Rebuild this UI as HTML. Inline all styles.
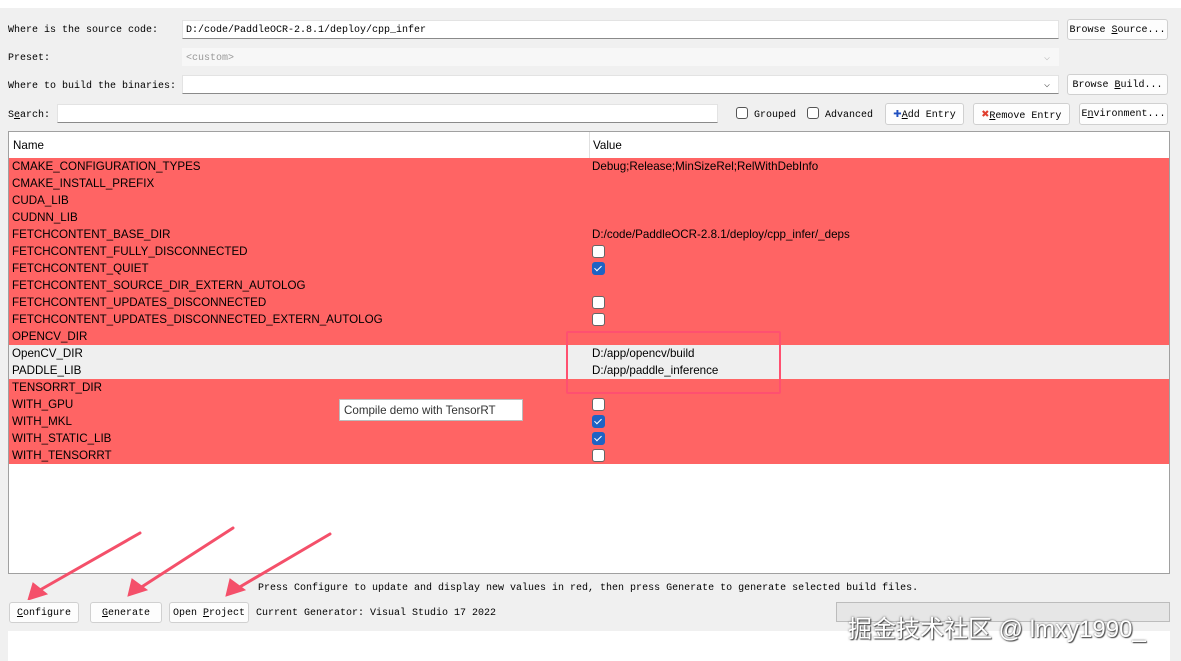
<!DOCTYPE html>
<html><head><meta charset="utf-8"><style>
*{box-sizing:border-box;margin:0;padding:0}
body{width:1181px;height:661px;background:#f0f0f0;position:relative;overflow:hidden;font-family:"Liberation Mono",monospace;font-size:10px;color:#000}
.a{position:absolute;white-space:nowrap}
.in{position:absolute;background:#fff;border:1px solid #e3e3e3;border-bottom:1px solid #8a8a8a}
.btn{position:absolute;background:#fdfdfd;border:1px solid #d0d0d0;border-radius:3px;text-align:center;line-height:21px;font-size:10px}
.cb{position:absolute;width:12px;height:12px;border:1px solid #555;border-radius:3px;background:#fff}
.tb{position:absolute;left:8px;top:131px;width:1162px;height:443px;background:#fff;border:1px solid #a0a0a0;font-family:"Liberation Sans",sans-serif;font-size:11.6px}
.row{position:absolute;left:0;width:1160px;height:17px;line-height:18px;background:#ff6464}
.row span{position:absolute;left:3px}
.row b{font-weight:normal;position:absolute;left:583px}
.ck{position:absolute;left:583px;top:2px;width:13px;height:13px;border:1px solid #666;border-radius:3px;background:#fff}
.ck.on{background:#1e63c4;border-color:#1e63c4}
.ck.on::after{content:"";position:absolute;left:3px;top:1px;width:3px;height:6px;border:solid #fff;border-width:0 1.5px 1.5px 0;transform:rotate(45deg)}
u{text-decoration:underline}
</style></head><body>
<div class="a" style="left:0;top:0;width:1181px;height:8px;background:#fff"></div>
<div class="a" style="left:8px;top:25px">Where is the source code:</div>
<div class="in" style="left:182px;top:20px;width:877px;height:19px"></div>
<div class="a" style="left:186px;top:25px">D:/code/PaddleOCR-2.8.1/deploy/cpp_infer</div>
<div class="btn" style="left:1067px;top:19px;width:101px;height:21px">Browse <u>S</u>ource...</div>
<div class="a" style="left:8px;top:53px">Preset:</div>
<div class="a" style="left:182px;top:48px;width:877px;height:18px;background:#f7f7f7"></div>
<div class="a" style="left:186px;top:53px;color:#999">&lt;custom&gt;</div>
<div class="a" style="left:1044px;top:52px;color:#bbb">⌵</div>
<div class="a" style="left:8px;top:81px">Where to build the binaries:</div>
<div class="in" style="left:182px;top:75px;width:877px;height:19px"></div>
<div class="a" style="left:1044px;top:79px;color:#555">⌵</div>
<div class="btn" style="left:1067px;top:74px;width:101px;height:21px">Browse <u>B</u>uild...</div>
<div class="a" style="left:8px;top:110px">S<u>e</u>arch:</div>
<div class="in" style="left:57px;top:104px;width:661px;height:19px"></div>
<div class="cb" style="left:736px;top:107px"></div><div class="a" style="left:754px;top:110px">Grouped</div>
<div class="cb" style="left:807px;top:107px"></div><div class="a" style="left:825px;top:110px">Advanced</div>
<div class="btn" style="left:885px;top:103px;width:79px;height:22px"><span style="color:#2050c0;font-weight:bold;font-size:14px">✚</span><u>A</u>dd Entry</div>
<div class="btn" style="left:973px;top:103px;width:97px;height:22px"><span style="color:#e04030;font-weight:bold;font-size:13px">✖</span><u>R</u>emove Entry</div>
<div class="btn" style="left:1079px;top:103px;width:89px;height:22px">E<u>n</u>vironment...</div>

<div class="tb">
<div class="a" style="left:4px;top:7px">Name</div>
<div class="a" style="left:580px;top:0;width:1px;height:26px;background:#e0e0e0"></div>
<div class="a" style="left:584px;top:7px">Value</div>
<div class="row" style="top:26px"><span>CMAKE_CONFIGURATION_TYPES</span><b>Debug;Release;MinSizeRel;RelWithDebInfo</b></div>
<div class="row" style="top:43px"><span>CMAKE_INSTALL_PREFIX</span></div>
<div class="row" style="top:60px"><span>CUDA_LIB</span></div>
<div class="row" style="top:77px"><span>CUDNN_LIB</span></div>
<div class="row" style="top:94px"><span>FETCHCONTENT_BASE_DIR</span><b>D:/code/PaddleOCR-2.8.1/deploy/cpp_infer/_deps</b></div>
<div class="row" style="top:111px"><span>FETCHCONTENT_FULLY_DISCONNECTED</span><i class="ck"></i></div>
<div class="row" style="top:128px"><span>FETCHCONTENT_QUIET</span><i class="ck on"></i></div>
<div class="row" style="top:145px"><span>FETCHCONTENT_SOURCE_DIR_EXTERN_AUTOLOG</span></div>
<div class="row" style="top:162px"><span>FETCHCONTENT_UPDATES_DISCONNECTED</span><i class="ck"></i></div>
<div class="row" style="top:179px"><span>FETCHCONTENT_UPDATES_DISCONNECTED_EXTERN_AUTOLOG</span><i class="ck"></i></div>
<div class="row" style="top:196px"><span>OPENCV_DIR</span></div>
<div class="row" style="top:213px;background:#efefef"><span>OpenCV_DIR</span><b>D:/app/opencv/build</b></div>
<div class="row" style="top:230px;background:#efefef"><span>PADDLE_LIB</span><b>D:/app/paddle_inference</b></div>
<div class="row" style="top:247px"><span>TENSORRT_DIR</span></div>
<div class="row" style="top:264px"><span>WITH_GPU</span><i class="ck"></i></div>
<div class="row" style="top:281px"><span>WITH_MKL</span><i class="ck on"></i></div>
<div class="row" style="top:298px"><span>WITH_STATIC_LIB</span><i class="ck on"></i></div>
<div class="row" style="top:315px"><span>WITH_TENSORRT</span><i class="ck"></i></div>
<div class="a" style="left:557px;top:199px;width:215px;height:63px;border:2px solid #ff5070;border-radius:2px"></div>
<div class="a" style="left:330px;top:267px;width:184px;height:22px;background:#fff;border:1px solid #bbb;line-height:21px;padding-left:4px;color:#333">Compile demo with TensorRT</div>
</div>

<div class="a" style="left:258px;top:583px">Press Configure to update and display new values in red, then press Generate to generate selected build files.</div>
<div class="btn" style="left:9px;top:602px;width:70px;height:21px"><u>C</u>onfigure</div>
<div class="btn" style="left:90px;top:602px;width:72px;height:21px"><u>G</u>enerate</div>
<div class="btn" style="left:169px;top:602px;width:80px;height:21px">Open <u>P</u>roject</div>
<div class="a" style="left:256px;top:608px">Current Generator: Visual Studio 17 2022</div>
<div class="a" style="left:836px;top:602px;width:334px;height:20px;background:#e6e6e6;border:1px solid #bcbcbc"></div>
<div class="a" style="left:8px;top:631px;width:1162px;height:30px;background:#fff"></div>
<div class="a" style="left:848px;top:609px;font-family:'Liberation Sans','Noto Sans CJK SC',sans-serif;font-size:24px;color:#fff;text-shadow:0 0 2px #555,1px 1px 1px #444">掘金技术社区 @ lmxy1990_</div>
<svg class="a" style="left:0;top:520px" width="340" height="80" viewBox="0 0 340 80">
<g fill="#f4506a" stroke="#f4506a" stroke-linecap="round">
<path d="M140 13 L40 70" stroke-width="3"/><path d="M28 80 L33 63 L47 74 Z"/>
<path d="M233 8 L140 68" stroke-width="3"/><path d="M128 76 L132 59 L147 70 Z"/>
<path d="M330 14 L238 68" stroke-width="3"/><path d="M226 76 L230 59 L245 70 Z"/>
</g></svg>
</body></html>
